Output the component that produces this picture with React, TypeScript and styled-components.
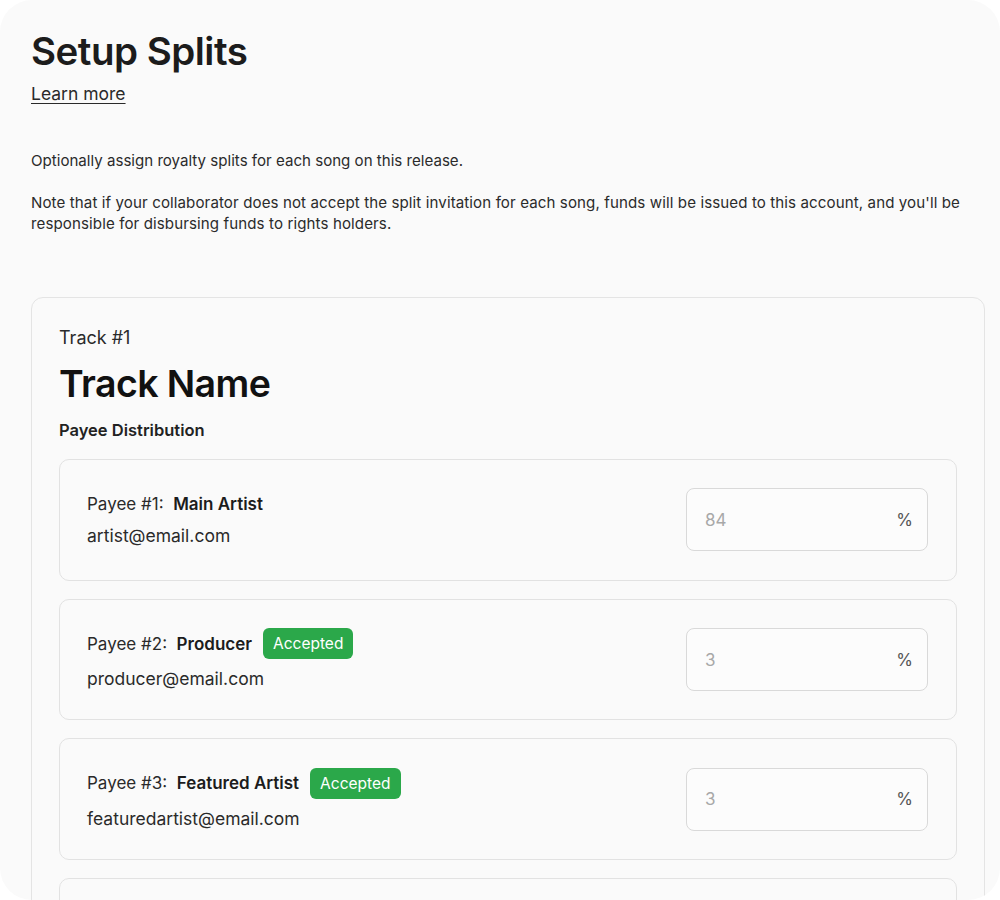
import React from 'react';
import styled, {createGlobalStyle} from 'styled-components';

type Payee = {
  index: number;
  role: string;
  email: string;
  share: number;
  accepted: boolean;
};

const payees: Payee[] = [
  {index: 1, role: 'Main Artist', email: 'artist@email.com', share: 84, accepted: false},
  {index: 2, role: 'Producer', email: 'producer@email.com', share: 3, accepted: true},
  {index: 3, role: 'Featured Artist', email: 'featuredartist@email.com', share: 3, accepted: true},
  {index: 4, role: 'Songwriter', email: 'songwriter@email.com', share: 10, accepted: false},
];

const PayeeCard = ({payee}: {payee: Payee}) => (
  <PayeeBox>
    <PayeeInfo>
      <PayeeLine>
        Payee #{payee.index}:&nbsp; <Role>{payee.role}</Role>
        {payee.accepted && <Badge>Accepted</Badge>}
      </PayeeLine>
      <Email>{payee.email}</Email>
    </PayeeInfo>
    <ShareField>
      <ShareInput placeholder={String(payee.share)} />
      <Percent>%</Percent>
    </ShareField>
  </PayeeBox>
);

const App = () => {
  return (
    <>
      <GlobalStyle />
      <Page>
        <Title>Setup Splits</Title>
        <LearnMore href="#">Learn more</LearnMore>
        <Intro>
          <p>Optionally assign royalty splits for each song on this release.</p>
          <p>
            Note that if your collaborator does not accept the split invitation for each song, funds will be
            issued to this account, and you'll be responsible for disbursing funds to rights holders.
          </p>
        </Intro>
        <TrackCard>
          <TrackNumber>Track #1</TrackNumber>
          <TrackName>Track Name</TrackName>
          <SectionLabel>Payee Distribution</SectionLabel>
          <PayeeList>
            {payees.map(p => (
              <PayeeCard key={p.index} payee={p} />
            ))}
          </PayeeList>
        </TrackCard>
      </Page>
    </>
  );
};

export default App;

const GlobalStyle = createGlobalStyle`
  html, body {
    margin: 0;
    background: #ffffff;
  }
  * {
    box-sizing: border-box;
  }
`;

const Page = styled.div`
  width: 1000px;
  height: 900px;
  overflow: hidden;
  border-radius: 32px;
  background: #fafafa;
  padding: 27px 15px 0 31px;
  font-family: Inter, 'Noto Sans', sans-serif;
  color: #1f1f1f;
`;

const Title = styled.h1`
  margin: 0;
  font-size: 38.5px;
  line-height: 48px;
  font-weight: 600;
  letter-spacing: -0.5px;
  color: #1c1c1c;
`;

const LearnMore = styled.a`
  display: inline-block;
  margin-top: 7px;
  font-size: 17.5px;
  line-height: 24px;
  color: #2a2a2a;
  text-decoration: underline;
  text-underline-offset: 3px;
`;

const Intro = styled.div`
  margin-top: 44px;
  font-size: 15.1px;
  line-height: 21px;
  color: #2b2b2b;
  p {
    margin: 0 0 21px;
  }
  p + p {
    letter-spacing: 0.1px;
  }
`;

const TrackCard = styled.section`
  margin-top: 63px;
  width: 954px;
  border: 1px solid #e4e4e4;
  border-radius: 12px;
  padding: 28px 27px 28px;
`;

const TrackNumber = styled.div`
  font-size: 18px;
  line-height: 24px;
  color: #2a2a2a;
`;

const TrackName = styled.h2`
  margin: 12px 0 0;
  font-size: 37.5px;
  line-height: 44px;
  font-weight: 600;
  letter-spacing: -0.6px;
  color: #111;
`;

const SectionLabel = styled.div`
  margin-top: 13px;
  font-size: 16.5px;
  line-height: 22px;
  font-weight: 600;
  color: #222;
`;

const PayeeList = styled.div`
  margin-top: 18px;
  display: flex;
  flex-direction: column;
  gap: 18px;
`;

const PayeeBox = styled.div`
  display: flex;
  align-items: center;
  justify-content: space-between;
  border: 1px solid #e2e2e2;
  border-radius: 10px;
  padding: 28px 28px 28px 27px;
  min-height: 121.7px;
`;

const PayeeInfo = styled.div`
  display: flex;
  flex-direction: column;
  gap: 8px;
`;

const PayeeLine = styled.div`
  display: flex;
  align-items: center;
  font-size: 17px;
  line-height: 24px;
  color: #2a2a2a;
  white-space: pre;
`;

const Role = styled.span`
  font-weight: 600;
  color: #1c1c1c;
`;

const Badge = styled.span`
  margin-left: 11px;
  background: #2ba84a;
  color: #fff;
  font-size: 15.5px;
  line-height: 31px;
  height: 31px;
  padding: 0 10px;
  border-radius: 6px;
`;

const Email = styled.div`
  font-size: 17.5px;
  line-height: 24px;
  color: #2a2a2a;
`;

const ShareField = styled.label`
  display: flex;
  align-items: center;
  width: 242px;
  height: 63px;
  border: 1px solid #d9d9d9;
  border-radius: 8px;
  padding: 0 14px 0 16px;
  background: #fcfcfc;
`;

const ShareInput = styled.input`
  flex: 1;
  min-width: 0;
  border: none;
  outline: none;
  background: transparent;
  font-family: inherit;
  font-size: 17px;
  color: #2a2a2a;
  &::placeholder {
    color: #a8a8a8;
  }
`;

const Percent = styled.span`
  font-size: 17px;
  color: #555;
`;
